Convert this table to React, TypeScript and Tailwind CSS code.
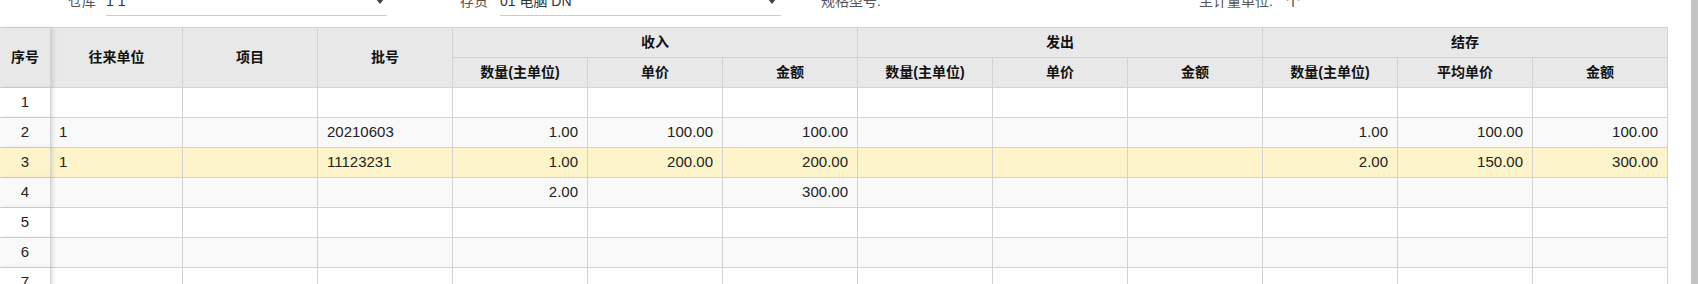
import React from "react";

type Row = {
  unit?: string;
  batch?: string;
  inQty?: string;
  inPrice?: string;
  inAmt?: string;
  outQty?: string;
  outPrice?: string;
  outAmt?: string;
  balQty?: string;
  balPrice?: string;
  balAmt?: string;
};

const rows: Row[] = [
  {},
  {
    unit: "1",
    batch: "20210603",
    inQty: "1.00",
    inPrice: "100.00",
    inAmt: "100.00",
    balQty: "1.00",
    balPrice: "100.00",
    balAmt: "100.00",
  },
  {
    unit: "1",
    batch: "11123231",
    inQty: "1.00",
    inPrice: "200.00",
    inAmt: "200.00",
    balQty: "2.00",
    balPrice: "150.00",
    balAmt: "300.00",
  },
  { inQty: "2.00", inAmt: "300.00" },
  {},
  {},
  {},
  {},
];

const cell = "border-r border-b border-[#d3d3d3] flex items-center";
const seqShadow = "relative z-10 shadow-[2px_0_4px_rgba(0,0,0,0.12)]";

function Caret() {
  return (
    <svg width="8" height="5" viewBox="0 0 8 5" className="shrink-0">
      <path d="M0 0 L8 0 L4 5 Z" fill="#444" />
    </svg>
  );
}

function FilterBar() {
  return (
    <div className="-mt-[13px] flex h-[29px] items-center text-[14px] text-[#333]">
      <span className="ml-[68px] w-[28px] text-[#555]">仓库</span>
      <div className="ml-[10px] flex h-[29px] w-[281px] items-center justify-between border-b border-[#cccccc] pr-[3px]">
        <span>1 1</span>
        <Caret />
      </div>
      <span className="ml-[73px] w-[28px] text-[#555]">存货</span>
      <div className="ml-[12px] flex h-[29px] w-[281px] items-center justify-between border-b border-[#cccccc] pr-[5px]">
        <span>01 电脑 DN</span>
        <Caret />
      </div>
      <div className="ml-[40px] w-[378px] text-[#555]">规格型号:</div>
      <div className="flex items-center">
        <span className="text-[#555]">主计量单位:</span>
        <span className="ml-[13px]">个</span>
      </div>
    </div>
  );
}

function Header() {
  const sub = ["数量(主单位)", "单价", "金额", "数量(主单位)", "单价", "金额", "数量(主单位)", "平均单价", "金额"];
  return (
    <div className="grid grid-cols-[51px_132px_repeat(11,135px)] grid-rows-[30px_30px] border-t border-[#d3d3d3] bg-[#e8e8e8] text-[14px] font-bold text-[#111]">
      <div className={`${cell} ${seqShadow} row-span-2 justify-center bg-[#e8e8e8]`}>序号</div>
      <div className={`${cell} row-span-2 justify-center`}>往来单位</div>
      <div className={`${cell} row-span-2 justify-center`}>项目</div>
      <div className={`${cell} row-span-2 justify-center`}>批号</div>
      <div className={`${cell} col-span-3 justify-center`}>收入</div>
      <div className={`${cell} col-span-3 justify-center`}>发出</div>
      <div className={`${cell} col-span-3 justify-center`}>结存</div>
      {sub.map((s, i) => (
        <div key={i} className={`${cell} justify-center`}>
          {s}
        </div>
      ))}
    </div>
  );
}

function BodyRow({ row, index }: { row: Row; index: number }) {
  const bg = index === 2 ? "bg-[#fdf5c9]" : index % 2 === 1 ? "bg-[#f9f9f9]" : "bg-white";
  const num = (v?: string) => (
    <div className={`${cell} justify-end px-[9px]`}>{v}</div>
  );
  return (
    <div className={`grid h-[30px] grid-cols-[51px_132px_repeat(11,135px)] text-[15px] text-[#222] ${bg}`}>
      <div className={`${cell} ${seqShadow} justify-center ${bg}`}>{index + 1}</div>
      <div className={`${cell} px-[8px]`}>{row.unit}</div>
      <div className={cell}></div>
      <div className={`${cell} px-[9px]`}>{row.batch}</div>
      {num(row.inQty)}
      {num(row.inPrice)}
      {num(row.inAmt)}
      {num(row.outQty)}
      {num(row.outPrice)}
      {num(row.outAmt)}
      {num(row.balQty)}
      {num(row.balPrice)}
      {num(row.balAmt)}
    </div>
  );
}

export default function App() {
  return (
    <div
      className="flex h-[284px] w-[1698px] overflow-hidden bg-white"
      style={{ fontFamily: '"Liberation Sans", "Noto Sans CJK SC", sans-serif' }}
    >
      <div className="w-[1691px] shrink-0">
        <FilterBar />
        <div className="mt-[11px] w-[1668px]">
          <Header />
          {rows.map((r, i) => (
            <BodyRow key={i} row={r} index={i} />
          ))}
        </div>
      </div>
      <div className="h-full w-[7px] bg-[#c4c4c4]" />
    </div>
  );
}
